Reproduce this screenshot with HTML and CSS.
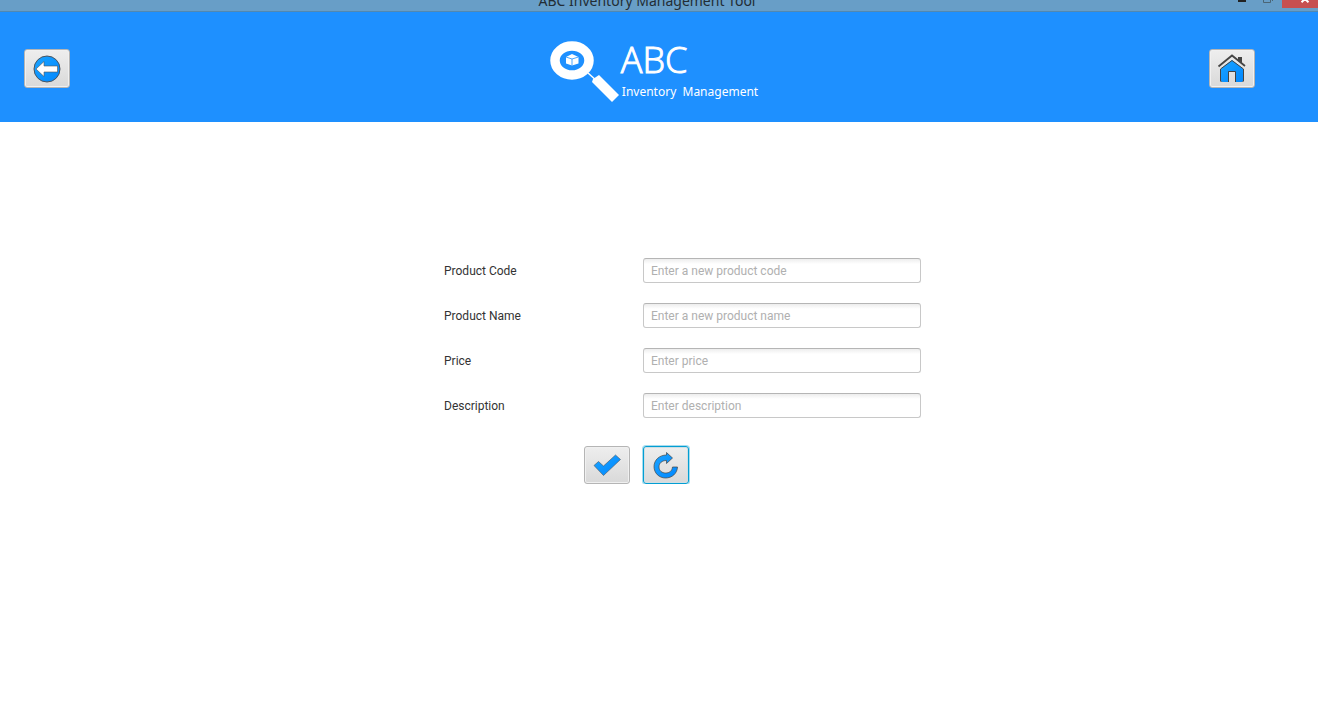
FILE: index.html
```html
<!DOCTYPE html>
<html lang="en">
<head>
<meta charset="utf-8">
<title>ABC Inventory Management Tool</title>
<link rel="stylesheet" href="styles.css">
</head>
<body>
<div class="titlebar">
  <span class="titlebar-text">ABC Inventory Management Tool</span>
  <div class="window-controls">
    <button class="window-button" aria-label="Minimize"><svg width="14" height="12" viewBox="0 0 14 12"><path d="M3 0h8v2H3z" fill="#222"/></svg></button>
    <button class="window-button" aria-label="Restore"><svg width="14" height="12" viewBox="0 0 14 12"><path d="M1.500 0v2.500h7V0M10.500 0v1" fill="none" stroke="#4b6575"/></svg></button>
    <button class="window-button window-close" aria-label="Close"><svg width="10" height="8" viewBox="0 0 10 8"><path d="M1.500 2.200L5 -1l3.500 3.200" fill="none" stroke="#fff" stroke-width="2"/></svg></button>
  </div>
</div>
<header class="header">
  <button class="button" aria-label="Back">
    <svg width="30" height="30" viewBox="0 0 30 30">
      <defs><linearGradient id="blue" x1="0" y1="0" x2="1" y2="1"><stop offset="0" stop-color="#1ba4ff"/><stop offset="1" stop-color="#0087ff"/></linearGradient></defs>
      <circle cx="15" cy="15" r="13" fill="url(#blue)" stroke="#4a5560"/>
      <path d="M4 15L12 7.500v4.500h13.500v6H12v4.500z" fill="#fff" stroke="#555" stroke-width=".6"/>
    </svg>
  </button>
  <div class="brand">
    <svg class="brand-mark" width="72" height="64" viewBox="0 0 72 64">
      <ellipse cx="23" cy="20.500" rx="17" ry="14.500" fill="none" stroke="#fff" stroke-width="9.500"/>
      <path d="M39 33l10 9" stroke="#fff" stroke-width="1.500"/>
      <path d="M50 35l20 20-7 7-20-20 1-3z" fill="#fff"/>
      <path d="M17 17l6-3 6.500 3v6.500l-6.500 2-6-2z" fill="#fff"/>
      <path d="M17 17l6 2 6.500-2M23 19v6.500" fill="none" stroke="#1e90ff" stroke-width=".8"/>
    </svg>
    <div class="brand-text">
      <span class="brand-name">ABC</span>
      <span class="brand-tagline">Inventory&nbsp; Management</span>
    </div>
  </div>
  <button class="button" aria-label="Home">
    <svg width="30" height="30" viewBox="0 0 30 30">
      <path d="M15 6L26 14.500V27l-1 1h-6V18h-8v10H5l-1-1V14.500z" fill="url(#blue)"/>
      <path d="M15 6.500L3.500 15v12l1 1M15 6.500L26.500 15v12l-1 1M11.500 28V17.500h7V28" fill="none" stroke="#444"/>
      <path d="M1.500 12.500L15 1.500l13 10.500" fill="none" stroke="#444" stroke-width="1.800"/>
      <path d="M21 3h4v6l-4-3z" fill="#444"/>
    </svg>
  </button>
</header>
<main class="content">
  <form class="form">
    <label for="code">Product Code</label>
    <input class="field" id="code" type="text" placeholder="Enter a new product code">
    <label for="name">Product Name</label>
    <input class="field" id="name" type="text" placeholder="Enter a new product name">
    <label for="price">Price</label>
    <input class="field" id="price" type="text" placeholder="Enter price">
    <label for="description">Description</label>
    <input class="field" id="description" type="text" placeholder="Enter description">
    <div class="actions">
      <button class="button" type="submit" aria-label="Save">
        <svg width="30" height="30" viewBox="0 0 30 30"><path d="M2 15.500L6.500 11.500l5 4.500L23.500 5l5 4.500L11.500 25.500z" fill="url(#blue)" stroke="#4a5560" stroke-width=".6"/></svg>
      </button>
      <button class="button button-focused" type="reset" aria-label="Reset">
        <svg width="30" height="30" viewBox="0 0 30 30"><path d="M15.500 2.500l6 5.500-6 5.500v-3C11 10.500 8 13 8 17c0 3.500 2.800 6 6.500 6 4 0 6.500-2 7-6h5c-.3 6.500-5.500 11-12 11C8 28 3 23 3 16.500S8.500 5 15.500 5z" fill="url(#blue)" stroke="#444" stroke-width=".7"/></svg>
      </button>
    </div>
  </form>
</main>
</body>
</html>
```
FILE: styles.css
```css
* { box-sizing: border-box; }
body {
  margin: 0;
  background: #fff;
  color: #333;
  font: 12px/16px Roboto, sans-serif;
}
button { margin: 0; font: inherit; }
svg { display: block; }

.titlebar {
  position: relative;
  display: flex;
  justify-content: center;
  align-items: flex-end;
  height: 12px;
  padding-right: 24px;
  overflow: hidden;
  background: #689ec7;
  border-bottom: 1px solid #5288b0;
}
.titlebar-text {
  flex: none;
  color: #222d35;
  font: 14px/20px "Noto Sans", sans-serif;
}
.window-controls {
  position: absolute;
  top: 0;
  right: 0;
  display: flex;
}
.window-button {
  display: flex;
  width: 27px;
  height: 8px;
  padding: 0;
  justify-content: center;
  border: 0;
  background: transparent;
}
.window-close {
  width: 36px;
  padding-left: 10px;
  background: #c75050;
}

.header {
  display: flex;
  justify-content: space-between;
  align-items: center;
  height: 110px;
  padding: 3px 63px 0 24px;
  background: #1e90ff;
}
.button {
  display: flex;
  justify-content: center;
  align-items: center;
  width: 46px;
  height: 38px;
  padding: 0;
  border: 1px solid #b5b5b5;
  border-radius: 3px;
  background: linear-gradient(#eee, #d9d9d9);
  box-shadow: inset 0 0 0 1px #f0f0f0;
}
.header .button {
  height: 39px;
}
.button-focused {
  border-color: #039ed3;
  box-shadow: 0 0 0 1px #a5ddf0, inset 0 0 0 1px #cfdfe4;
}

.brand {
  display: flex;
  align-items: center;
  padding: 6px 0 0 28px;
  color: #fff;
  font-family: "Noto Sans", sans-serif;
}
.brand-text {
  display: flex;
  flex-direction: column;
}
.brand-name {
  font: 300 36px/40px "Open Sans", sans-serif;
  -webkit-text-stroke: 1px #fff;
}
.brand-tagline {
  padding-left: 1px;
  font-size: 12px;
  line-height: 24px;
}

.content {
  display: flex;
  justify-content: center;
  padding: 136px 0 0 47px;
}
.form {
  display: grid;
  grid-template-columns: 186px 278px;
  align-items: center;
  gap: 20px 13px;
}
.field {
  width: 100%;
  height: 25px;
  padding: 0 7px;
  border: 1px solid #c8c8c8;
  border-top-color: #b5b5b5;
  border-radius: 3px;
  background: linear-gradient(#ededed, #fff 5px);
  color: #333;
  font: inherit;
}
.field::placeholder { color: #b0b0b0; }
.actions {
  display: flex;
  grid-column: 1 / -1;
  gap: 13px;
  padding: 8px 0 0 140px;
}
```
